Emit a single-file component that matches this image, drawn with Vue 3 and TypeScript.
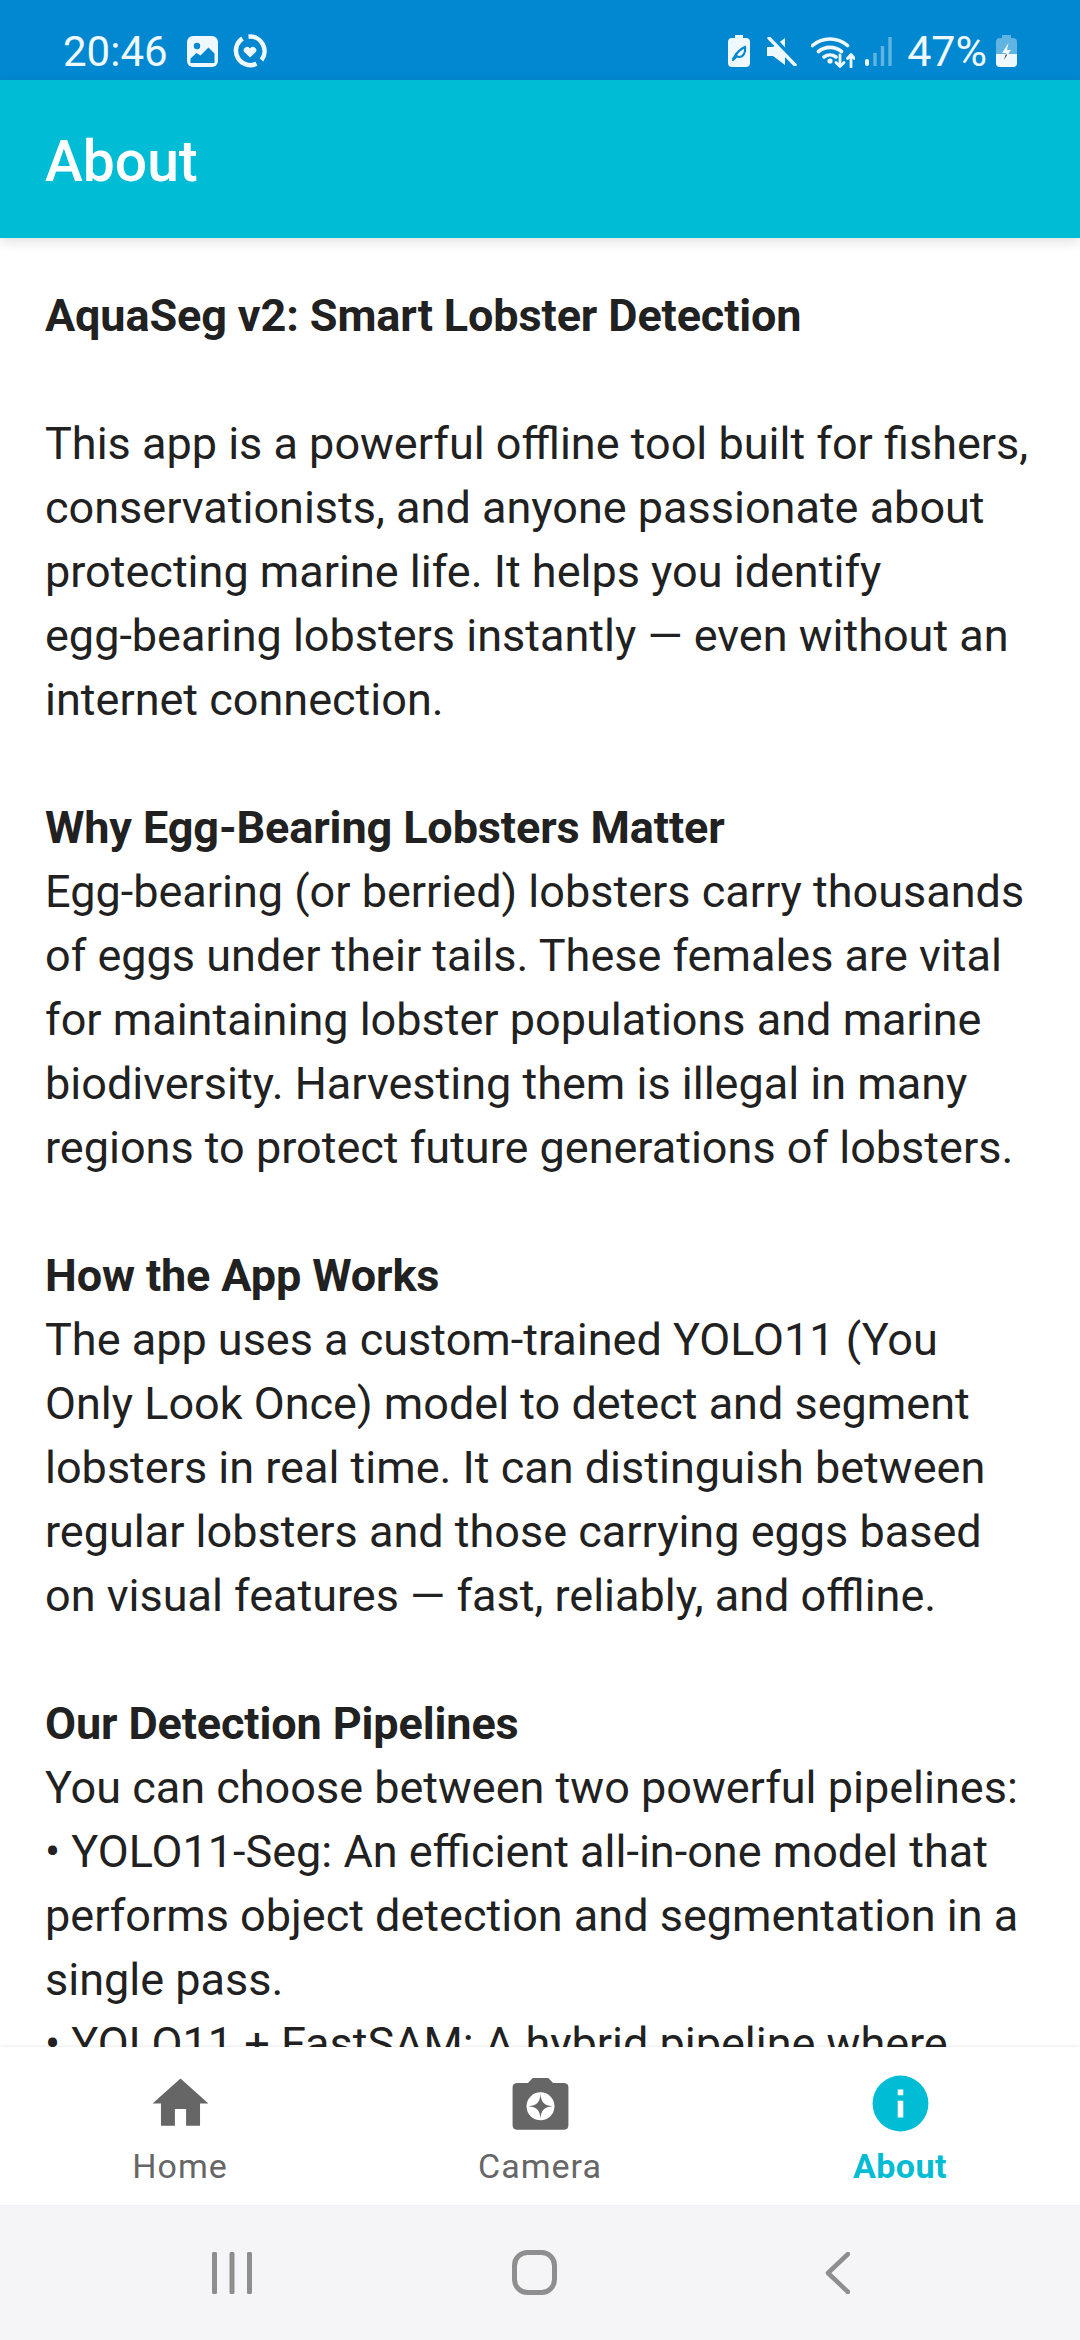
<script setup lang="ts">
interface Block { title?: string; lines: string[] }
const blocks: Block[] = [
  { title: 'AquaSeg v2: Smart Lobster Detection', lines: [] },
  { lines: ['This app is a powerful offline tool built for fishers,', 'conservationists, and anyone passionate about', 'protecting marine life. It helps you identify', 'egg-bearing lobsters instantly — even without an', 'internet connection.'] },
  { title: 'Why Egg-Bearing Lobsters Matter', lines: ['Egg-bearing (or berried) lobsters carry thousands', 'of eggs under their tails. These females are vital', 'for maintaining lobster populations and marine', 'biodiversity. Harvesting them is illegal in many', 'regions to protect future generations of lobsters.'] },
  { title: 'How the App Works', lines: ['The app uses a custom-trained YOLO11 (You', 'Only Look Once) model to detect and segment', 'lobsters in real time. It can distinguish between', 'regular lobsters and those carrying eggs based', 'on visual features — fast, reliably, and offline.'] },
  { title: 'Our Detection Pipelines', lines: ['You can choose between two powerful pipelines:', '• YOLO11-Seg: An efficient all-in-one model that', 'performs object detection and segmentation in a', 'single pass.', '• YOLO11 + FastSAM: A hybrid pipeline where'] },
]
</script>

<template>
  <div class="screen">
    <div class="status">
      <div class="status-left">
        <span class="clock">20:46</span>
        <svg class="pic" width="31" height="31" viewBox="0 0 31 31"><rect width="31" height="31" rx="6" fill="#eef8fd" /><circle cx="10" cy="10" r="3.200" fill="#0288d1" /><path d="M3.500 27v-4.500l6-5.500 4 2.500 8-8 6 6V27z" fill="#0288d1" /></svg>
        <svg width="34" height="34" viewBox="0 0 34 34"><path d="M15.500 2.700A14.500 14.500 0 0 1 28.500 26M23.500 29.800A14.500 14.500 0 0 1 9.500 4.500" fill="none" stroke="#eef8fd" stroke-width="4.500" /><path d="M17 23.500l-5.800-5.400a3.300 3.300 0 0 1 5.800-3.600 3.300 3.300 0 0 1 5.800 3.600z" fill="#eef8fd" /></svg>
      </div>
      <div class="status-right">
        <svg width="22" height="32" viewBox="0 0 22 32"><path d="M7 0h8v3h3a4 4 0 0 1 4 4v21a4 4 0 0 1-4 4H4a4 4 0 0 1-4-4V7a4 4 0 0 1 4-4h3z" fill="#eef8fd" /><path d="M5 24c4-7 7-10 12-12 1 6-2 10-6 10-2 0-3-1-3-3M5 25l3-3" fill="none" stroke="#0288d1" stroke-width="2.200" stroke-linecap="round" /></svg>
        <svg class="mute" width="30" height="29" viewBox="0 0 30 29"><path d="M0 10h6l12-9v27L6 19H0z" fill="#eef8fd" /><path d="M5 0l25 27" stroke="#0288d1" stroke-width="5" /><path d="M2 1l26 27" stroke="#eef8fd" stroke-width="3.400" stroke-linecap="round" /></svg>
        <svg class="wifi" width="44" height="33" viewBox="0 0 44 33"><path d="M1.500 10.500a27 27 0 0 1 35 0M7.500 16.500a18 18 0 0 1 23 0M13 22a10 10 0 0 1 12 0" fill="none" stroke="#eef8fd" stroke-width="3.600" stroke-linecap="round" /><circle cx="19" cy="26" r="2.600" fill="#eef8fd" /><path d="M29 20v11M25 27.500l4 4 4-4M40 32V20M36.500 23.500l3.500-4 3.500 4" fill="none" stroke="#eef8fd" stroke-width="2.800" stroke-linecap="round" stroke-linejoin="round" /></svg>
        <svg class="sig" width="27" height="29" viewBox="0 0 27 29"><rect x="0" y="22" width="4" height="7" rx="2" fill="#eef8fd" /><path d="M10 29V16M17.500 29V9M25 29V0" stroke="#eef8fd" stroke-opacity=".4" stroke-width="3.400" /></svg>
        <span class="pct">47%</span>
        <svg class="batt" width="21" height="32" viewBox="0 0 21 32"><path d="M6 0h9v3h2a4 4 0 0 1 4 4v21a4 4 0 0 1-4 4H4a4 4 0 0 1-4-4V7a4 4 0 0 1 4-4h2z" fill="#eef8fd" fill-opacity=".4" /><path d="M0 19h21v9a4 4 0 0 1-4 4H4a4 4 0 0 1-4-4z" fill="#eef8fd" /><path d="M12.500 8L6 18h4l-2 7 7-10h-4z" fill="#eef8fd" /><path d="M10 19l-2 6 3-5z" fill="#1c2b33" /></svg>
      </div>
    </div>
    <header class="appbar">About</header>
    <main class="content">
      <section v-for="(b, i) in blocks" :key="i" class="block">
        <p v-if="b.title" class="title">{{ b.title }}</p>
        <p v-for="l in b.lines" :key="l">{{ l }}</p>
      </section>
    </main>
    <nav class="tabs">
      <div class="tab">
        <svg width="67" height="67" viewBox="0 0 24 24"><path d="M10 20v-6h4v6h5v-8h3L12 3 2 12h3v8z" fill="#666" /></svg>
        <span>Home</span>
      </div>
      <div class="tab">
        <svg width="67" height="67" viewBox="0 0 24 24"><path d="M9.200 2.900h5.600l1.700 1.800H20.500A1.600 1.600 0 0 1 22 6.300v13.500a1.600 1.600 0 0 1-1.500 1.600h-17A1.600 1.600 0 0 1 2 19.800V6.300a1.600 1.600 0 0 1 1.500-1.600h4z" fill="#666" /><circle cx="12" cy="13" r="5" fill="#fff" /><path d="M12 8.700c.3 3 1.300 4 4.300 4.300-3 .3-4 1.300-4.300 4.300-.3-3-1.300-4-4.300-4.300 3-.3 4-1.300 4.300-4.300z" fill="#666" /></svg>
        <span>Camera</span>
      </div>
      <div class="tab active">
        <svg width="67" height="67" viewBox="0 0 24 24"><circle cx="12" cy="12" r="10" fill="#00bcd4" /><path d="M11 11h2v6h-2zM11 7h2v2h-2z" fill="#fff" /></svg>
        <span>About</span>
      </div>
    </nav>
    <div class="sysnav">
      <svg width="40" height="42" viewBox="0 0 40 42"><path d="M2.500 2v38M20 2v38M37.500 2v38" stroke="#8e8e8e" stroke-width="5" stroke-linecap="round" /></svg>
      <svg class="home-btn" width="45" height="45" viewBox="0 0 45 45"><rect x="2.500" y="2.500" width="40" height="40" rx="13" fill="none" stroke="#8e8e8e" stroke-width="5" /></svg>
      <svg width="25" height="42" viewBox="0 0 25 42"><path d="M23 2L3 21l20 19" fill="none" stroke="#8e8e8e" stroke-width="4.500" stroke-linecap="round" stroke-linejoin="round" /></svg>
    </div>
  </div>
</template>

<style scoped>
.screen { width: 1080px; height: 2340px; display: flex; flex-direction: column; font-family: Roboto, sans-serif; background: #fff; overflow: hidden; }
.status { height: 80px; flex: none; background: #0288d1; color: #eef8fd; display: flex; justify-content: space-between; align-items: center; padding: 22px 63px 0 63px; box-sizing: border-box; }
.status-left, .status-right { display: flex; align-items: center; }
.clock { font-size: 42px; margin-right: 19px; }
.status-left svg { margin-right: 15px; }
.status-left svg:last-child { margin-right: 0; }
.mute { margin-left: 17px; }
.wifi { margin-left: 14px; }
.sig { margin-left: 10px; }
.pct { font-size: 43px; margin-left: 15px; }
.batt { margin-left: 9px; }
.appbar { height: 158px; flex: none; background: #00bcd4; color: #fff; font-size: 57px; font-weight: 500; display: flex; align-items: center; padding: 4px 0 0 45px; box-sizing: border-box; box-shadow: 0 4px 12px rgba(0,0,0,.12); z-index: 1; }
.content { flex: 1; min-height: 0; overflow: hidden; padding: 46px 45px 0; color: #212121; font-size: 45px; line-height: 64px; }
.content p { margin: 0; white-space: nowrap; }
.block { margin-bottom: 64px; }
.title { font-weight: 700; letter-spacing: -.12px; }
.tabs { height: 158px; flex: none; display: flex; background: #fff; box-shadow: 0 -1px 3px rgba(0,0,0,.08); z-index: 1; }
.tab { flex: 1; display: flex; flex-direction: column; align-items: center; padding-top: 23px; color: #666; font-size: 34px; letter-spacing: 1px; line-height: 40px; }
.tab svg { margin-bottom: 9px; }
.tab.active { color: #00bcd4; font-weight: 700; letter-spacing: .5px; }
.sysnav { height: 135px; flex: none; background: #f5f5f7; display: flex; justify-content: space-between; align-items: center; padding: 0 230px 0 212px; box-sizing: border-box; }
.home-btn { margin-right: 8px; }
</style>

<style>
body { margin: 0; }
</style>
